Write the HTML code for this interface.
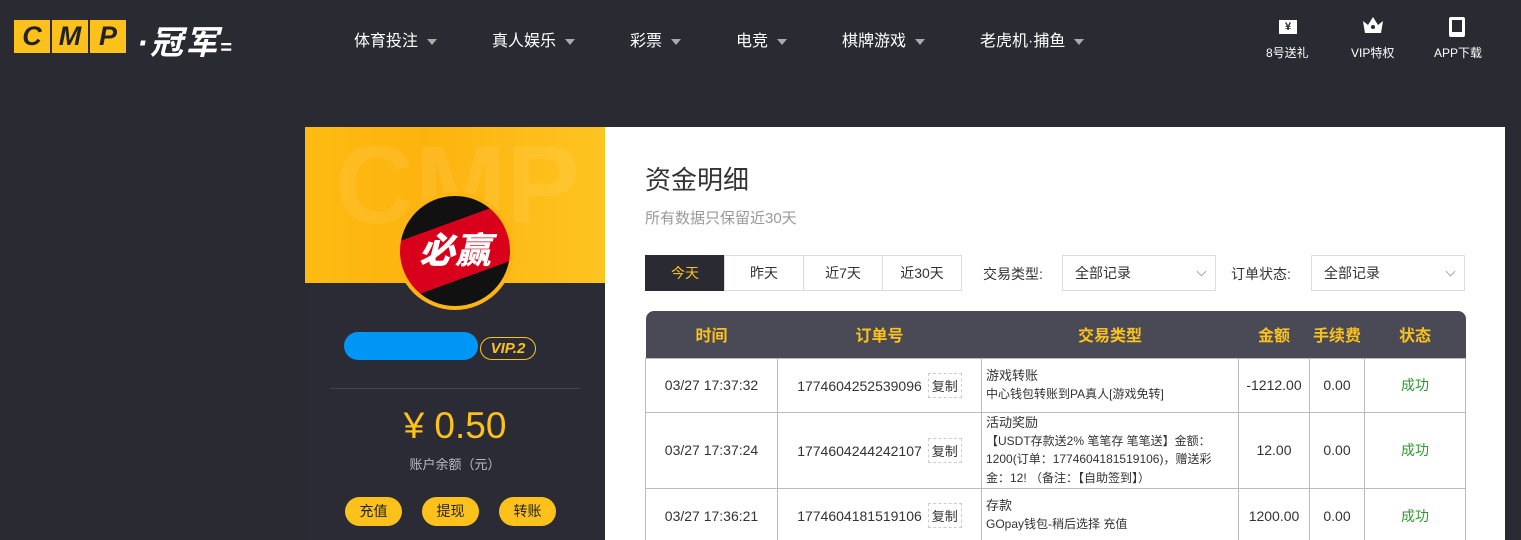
<!DOCTYPE html><html><head><meta charset="utf-8"><style>
*{margin:0;padding:0;box-sizing:border-box}
html,body{width:1521px;height:540px;overflow:hidden}
body{background:#2a2a33;font-family:"Liberation Sans","Noto Sans CJK SC",sans-serif;position:relative;color:#333}
.abs{position:absolute}
.nav{top:27px;color:#fff;font-size:16px}
.nav span.c{display:inline-block;margin-left:9px;width:0;height:0;border-left:5px solid transparent;border-right:5px solid transparent;border-top:6px solid #aaa;vertical-align:middle}
.logo b{position:absolute;top:0;width:36px;height:33px;background:#fcc21b;color:#222;font-style:italic;font-size:27px;text-align:center;line-height:33px;font-weight:900}
.ico{color:#fff;font-size:12px;text-align:center;top:44px}
.tab{top:255px;height:36px;border:1px solid #ddd;text-align:center;line-height:34px;font-size:14px;background:#fff}
.sel{top:255px;height:36px;border:1px solid #ddd;font-size:14px;line-height:34px;padding-left:12px;background:#fff}
.sel:after{content:"";position:absolute;right:10px;top:12px;width:6px;height:6px;border-right:1px solid #aaa;border-bottom:1px solid #aaa;transform:rotate(45deg)}
table{border-collapse:collapse;position:absolute;left:645px;top:311px;width:820px;font-size:14px;table-layout:fixed}
th{background:#4a4a57;color:#fcc21b;height:47px;font-size:16px;font-weight:bold}
td{border:1px solid #bbb;text-align:center;color:#333;padding:0}
td.t{text-align:left;padding:1px 4px;font-size:13px;line-height:18px}
td.t small{font-size:12px;display:block;line-height:18.5px}
.cp{display:inline-block;border:1px dashed #ccc;padding:2px 3px;margin-left:6px;font-size:13px}
.ok{color:#2e9a2e}
.btn{top:497px;width:57px;height:29px;border-radius:15px;background:#fcc21b;text-align:center;line-height:29px;font-size:14px;color:#222}
</style></head><body>
<div class="abs logo" style="left:14px;top:20px;width:120px;height:33px"><b style="left:0">C</b><b style="left:38px">M</b><b style="left:76px">P</b></div>
<div class="abs" style="left:137px;top:16px;color:#fff;font-size:33px;font-style:italic;font-weight:bold;letter-spacing:2px">·冠军<span style="font-size:20px">=</span></div>
<div class="abs nav" style="left:354px">体育投注<span class="c"></span></div>
<div class="abs nav" style="left:492px">真人娱乐<span class="c"></span></div>
<div class="abs nav" style="left:630px">彩票<span class="c"></span></div>
<div class="abs nav" style="left:736px">电竞<span class="c"></span></div>
<div class="abs nav" style="left:842px">棋牌游戏<span class="c"></span></div>
<div class="abs nav" style="left:980px">老虎机·捕鱼<span class="c"></span></div>
<div class="abs" style="left:1279px;top:20px;width:18px;height:14px;background:#fff;color:#222;font-size:11px;text-align:center;line-height:14px;font-weight:bold">¥</div>
<div class="abs ico" style="left:1266px">8号送礼</div>
<svg class="abs" style="left:1361px;top:15px" width="24" height="20" viewBox="0 0 24 20"><path d="M2 6L7 10L12 2L17 10L22 6L20 18H4Z" fill="#fff"/><circle cx="12" cy="12" r="2" fill="#2a2a33"/></svg>
<div class="abs ico" style="left:1351px">VIP特权</div>
<div class="abs" style="left:1449px;top:17px;width:16px;height:20px;border:3px solid #fff;border-radius:2px;border-bottom-width:5px"></div>
<div class="abs ico" style="left:1434px">APP下载</div>

<div class="abs" style="left:305px;top:127px;width:300px;height:413px;background:#2b2b35"></div>
<div class="abs" style="left:305px;top:127px;width:300px;height:156px;background:linear-gradient(90deg,#fdbb12,#fdb30e 40%,#fec421);overflow:hidden"><div style="position:absolute;left:30px;top:-5px;font-size:110px;color:rgba(255,255,255,.08);font-weight:bold">CMP</div></div>
<div class="abs" style="left:396px;top:192px;width:118px;height:118px;border-radius:50%;background:#fdb515;padding:4px"><div style="width:110px;height:110px;border-radius:50%;background:linear-gradient(160deg,#111 30%,#d9001b 30%,#d9001b 70%,#111 70%);color:#fff;font-size:36px;font-weight:900;font-style:italic;text-align:center;line-height:110px">必赢</div></div>
<div class="abs" style="left:344px;top:332px;width:134px;height:28px;border-radius:14px;background:#0096f5"></div>
<div class="abs" style="left:480px;top:337px;width:56px;height:23px;border:1px solid #fcc21b;border-radius:12px;color:#fcc21b;font-style:italic;font-weight:bold;font-size:15px;text-align:center;line-height:21px">VIP.2</div>
<div class="abs" style="left:330px;top:388px;width:250px;height:1px;background:#444450"></div>
<div class="abs" style="left:305px;width:300px;top:405px;text-align:center;color:#fcc21b;font-size:37px">¥ 0.50</div>
<div class="abs" style="left:305px;width:300px;top:454px;text-align:center;color:#bbb;font-size:13px">账户余额（元）</div>
<div class="abs btn" style="left:345px">充值</div>
<div class="abs btn" style="left:422px">提现</div>
<div class="abs btn" style="left:499px">转账</div>

<div class="abs" style="left:605px;top:127px;width:900px;height:413px;background:#fff;overflow:hidden">
</div>
<div class="abs" style="left:645px;top:160px;font-size:26px;color:#333">资金明细</div>
<div class="abs" style="left:645px;top:207px;font-size:15px;color:#999">所有数据只保留近30天</div>
<div class="abs tab" style="left:645px;width:80px;background:#2a2a33;color:#fcc21b;border-color:#2a2a33">今天</div>
<div class="abs tab" style="left:724px;width:80px">昨天</div>
<div class="abs tab" style="left:803px;width:80px">近7天</div>
<div class="abs tab" style="left:882px;width:80px">近30天</div>
<div class="abs" style="left:983px;top:264px;font-size:14px">交易类型:</div>
<div class="abs sel" style="left:1062px;width:154px">全部记录</div>
<div class="abs" style="left:1231px;top:264px;font-size:14px">订单状态:</div>
<div class="abs sel" style="left:1311px;width:154px">全部记录</div>

<table>
<colgroup><col style="width:132px"><col style="width:204px"><col style="width:257px"><col style="width:71px"><col style="width:55px"><col style="width:101px"></colgroup>
<tr><th style="border-radius:8px 0 0 0">时间</th><th>订单号</th><th>交易类型</th><th>金额</th><th>手续费</th><th style="border-radius:0 8px 0 0">状态</th></tr>
<tr style="height:54px"><td>03/27 17:37:32</td><td>1774604252539096<span class="cp">复制</span></td><td class="t">游戏转账<small>中心钱包转账到PA真人[游戏免转]</small></td><td>-1212.00</td><td>0.00</td><td class="ok">成功</td></tr>
<tr style="height:76px"><td>03/27 17:37:24</td><td>1774604244242107<span class="cp">复制</span></td><td class="t">活动奖励<small>【USDT存款送2% 笔笔存 笔笔送】金额：<br>1200(订单：1774604181519106)，赠送彩<br>金：12! （备注：【自助签到】）</small></td><td>12.00</td><td>0.00</td><td class="ok">成功</td></tr>
<tr style="height:54px"><td>03/27 17:36:21</td><td>1774604181519106<span class="cp">复制</span></td><td class="t">存款<small>GOpay钱包-稍后选择 充值</small></td><td>1200.00</td><td>0.00</td><td class="ok">成功</td></tr>
</table>
</body></html>
